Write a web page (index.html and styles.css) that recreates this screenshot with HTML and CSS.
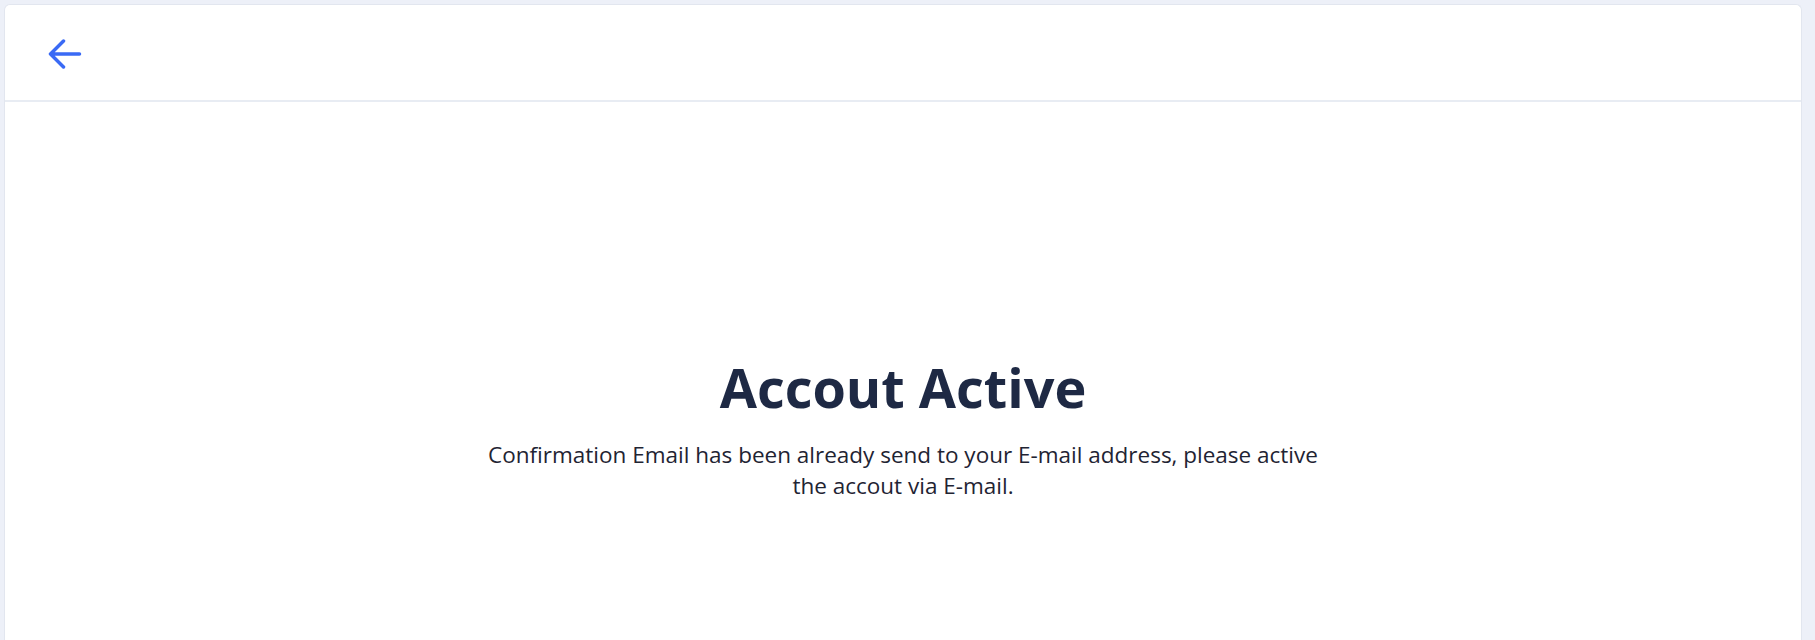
FILE: index.html
```html
<!DOCTYPE html>
<html lang="en">
<head>
<meta charset="utf-8">
<title>Accout Active</title>
<link rel="stylesheet" href="styles.css">
</head>
<body>
<div class="page">
  <div class="card">
    <header class="card-header">
      <button class="back" aria-label="Back">
        <svg width="34" height="30" viewBox="0 0 34 30" fill="none" stroke="#3a6af5" stroke-width="3.5" stroke-linecap="round" stroke-linejoin="round">
          <path d="M2.5 15H31.5M2.5 15L15.5 2M2.5 15L15.5 28"/>
        </svg>
      </button>
    </header>
    <main class="card-body">
      <h1 class="title">Accout Active</h1>
      <p class="message">Confirmation Email has been already send to your E-mail address, please active the accout via E-mail.</p>
    </main>
  </div>
</div>
</body>
</html>
```

FILE: styles.css
```css
html, body {
  margin: 0;
  padding: 0;
  height: 100%;
  overflow: hidden;
}
body {
  background: #edf0f8;
  font-family: "Open Sans", "Liberation Sans", sans-serif;
}
.page {
  padding: 4px 13px 0 4px;
  box-sizing: border-box;
  height: 100%;
}
.card {
  background: #ffffff;
  border: 1px solid #e2e6ef;
  border-bottom: 0;
  border-radius: 6px 6px 0 0;
  height: 100%;
  box-sizing: border-box;
}
.card-header {
  height: 97px;
  border-bottom: 2px solid #e8ecf3;
  display: flex;
  align-items: flex-start;
  padding-left: 43px;
  padding-top: 34px;
  box-sizing: border-box;
}
.back {
  border: 0;
  background: none;
  padding: 0;
  margin: 0;
  display: block;
  cursor: pointer;
}
.back svg {
  display: block;
}
.card-body {
  padding-top: 251px;
  display: flex;
  flex-direction: column;
  align-items: center;
  text-align: center;
}
.title {
  margin: 0;
  font-size: 54px;
  line-height: 68px;
  font-weight: 700;
  color: #1e2944;
}
.message {
  margin: 18px 0 0;
  max-width: 860px;
  font-size: 22.5px;
  line-height: 31px;
  color: #1f2433;
}
```
